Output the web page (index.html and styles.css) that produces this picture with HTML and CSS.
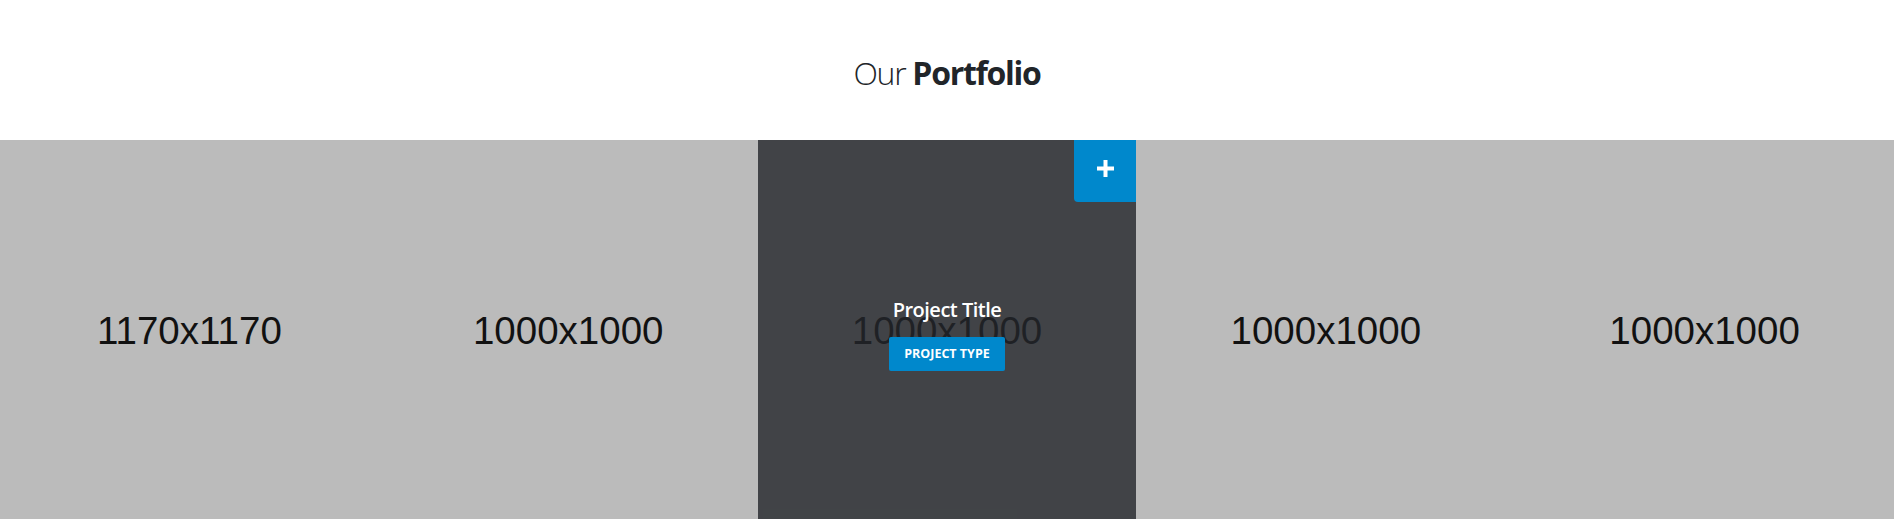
FILE: index.html
```html
<!DOCTYPE html>
<html lang="en">
<head>
<meta charset="utf-8">
<title>Our Portfolio</title>
<link rel="stylesheet" href="styles.css">
</head>
<body>
<section class="portfolio">
  <h2 class="portfolio-heading"><span class="light">Our</span> <strong>Portfolio</strong></h2>
  <div class="portfolio-grid">
    <div class="item"><span class="ph">1170x1170</span></div>
    <div class="item"><span class="ph">1000x1000</span></div>
    <div class="item">
      <span class="ph">1000x1000</span>
      <div class="overlay">
        <a class="plus" href="#" aria-label="Open project">
          <svg width="17" height="17" viewBox="0 0 17 17"><rect x="6.5" y="0" width="4" height="17" fill="#fff"/><rect x="0" y="6.5" width="17" height="4" fill="#fff"/></svg>
        </a>
        <div class="caption">
          <h3 class="project-title">Project Title</h3>
          <span class="project-type">Project Type</span>
        </div>
      </div>
    </div>
    <div class="item"><span class="ph">1000x1000</span></div>
    <div class="item"><span class="ph">1000x1000</span></div>
  </div>
</section>
</body>
</html>
```
FILE: styles.css
```css
html, body {
  margin: 0;
  padding: 0;
  background: #fff;
  overflow: hidden;
}
body {
  font-family: "Open Sans", "Liberation Sans", sans-serif;
  color: #222;
}
.portfolio-heading {
  margin: 0;
  padding: 51px 0 45px;
  height: 44px;
  line-height: 44px;
  font-size: 32px;
  letter-spacing: -1.3px;
  text-align: center;
  color: #212529;
  font-weight: 300;
}
.portfolio-heading .light { font-weight: 300; }
.portfolio-heading strong { font-weight: 700; }
.portfolio-grid {
  display: grid;
  grid-template-columns: repeat(5, 1fr);
}
.item {
  position: relative;
  aspect-ratio: 1 / 1;
  background: #bbbbbb;
  display: flex;
  align-items: center;
  justify-content: center;
}
.ph {
  font-family: "Liberation Sans", Arial, sans-serif;
  font-size: 38.5px;
  color: #111;
  margin-top: 4px;
}
.overlay {
  position: absolute;
  inset: 0;
  background: rgba(35, 38, 42, 0.8);
  display: flex;
  align-items: center;
  justify-content: center;
  padding-top: 8px;
  box-sizing: border-box;
}
.plus {
  position: absolute;
  top: 0;
  right: 0;
  width: 62px;
  height: 62px;
  background: #0088cc;
  border-bottom-left-radius: 4px;
  display: flex;
  align-items: center;
  justify-content: center;
  padding-bottom: 6px;
  box-sizing: border-box;
}
.plus svg { display: block; }
.caption {
  display: flex;
  flex-direction: column;
  align-items: center;
}
.project-title {
  margin: 0 0 14px;
  font-size: 20px;
  font-weight: 600;
  color: #fff;
  line-height: 27px;
  letter-spacing: -0.5px;
}
.project-type {
  display: inline-block;
  background: #0088cc;
  color: #fff;
  font-size: 12.5px;
  font-weight: 700;
  text-transform: uppercase;
  height: 34px;
  line-height: 34px;
  padding: 0 15px;
  border-radius: 2px;
}
```
